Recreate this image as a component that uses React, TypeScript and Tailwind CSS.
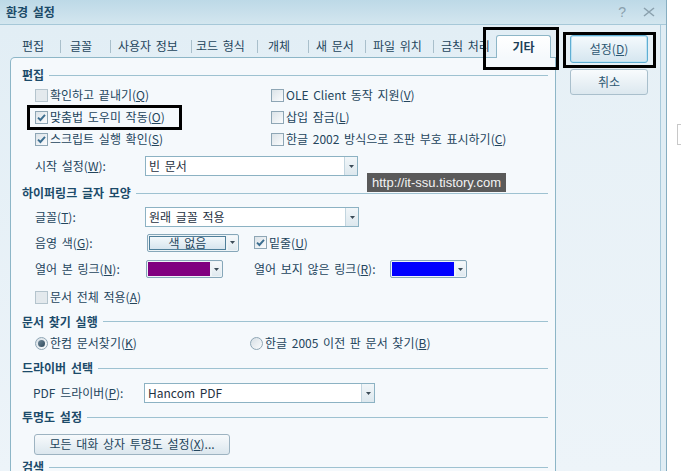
import React from "react";

function Check({ checked, dim }: { checked?: boolean; dim?: boolean }) {
  return (
    <span
      className={`relative inline-flex items-center justify-center w-[13px] h-[13px] shrink-0 border ${
        dim
          ? "border-[#b4c4cd] bg-[#e3e9ed]"
          : "border-[#8ea6b5] bg-gradient-to-br from-[#dbe3e8] to-[#fbfcfd]"
      }`}
    >
      {checked && (
        <svg width="11" height="11" viewBox="0 0 11 11">
          <path d="M2 5.6 L4.4 8 L9 2.8" fill="none" stroke="#3c6e90" strokeWidth="1.9" />
        </svg>
      )}
    </span>
  );
}

function Radio({ checked }: { checked?: boolean }) {
  return (
    <span className="inline-flex items-center justify-center w-[13px] h-[13px] shrink-0 rounded-full border border-[#8ea6b5] bg-gradient-to-br from-[#d6dfe5] to-[#fbfcfd]">
      {checked && <span className="w-[7px] h-[7px] rounded-full bg-gradient-to-br from-[#6f8899] to-[#2f4a5c]" />}
    </span>
  );
}

function Arrow() {
  return (
    <svg width="5" height="3" viewBox="0 0 5 3">
      <path d="M0 0 H5 L2.5 3 Z" fill="#3b4b57" />
    </svg>
  );
}

function Dropdown({ value, w }: { value: string; w: string }) {
  return (
    <div className={`${w} h-[20px] flex border border-[#8cb2c3] bg-white`}>
      <div className="flex-1 flex items-center pl-[3px] text-[#1f3242]">{value}</div>
      <div className="w-[13px] flex items-center justify-center bg-gradient-to-b from-[#f1f6f9] to-[#dde8ee] border-l border-[#c2d5df]">
        <Arrow />
      </div>
    </div>
  );
}

function ColorPick({ color, label, w }: { color?: string; label?: string; w: string }) {
  return (
    <div className="h-[18px] flex gap-[2px] border border-[#86a7b9] rounded-[2px] bg-[#eef4f7] p-px">
      {label ? (
        <div className={`${w} flex items-center justify-center border border-[#4f7f9a] bg-gradient-to-b from-[#f3f8fb] to-[#d7e5ee] text-[#24455c]`}>
          {label}
        </div>
      ) : (
        <div className={`${w}`} style={{ backgroundColor: color }} />
      )}
      <div className="w-[9px] flex items-center justify-center bg-gradient-to-b from-[#f6f9fb] to-[#dfe9ef]">
        <Arrow />
      </div>
    </div>
  );
}

function Header({ title }: { title: string }) {
  return (
    <div className="h-full flex items-center pl-[11px] pr-[7px]">
      <span className="font-bold text-[#1c4b6a]">{title}</span>
      <span className="flex-1 ml-[5px] h-px bg-[#9ec2d1]" />
    </div>
  );
}

function Tabs() {
  const sep = "w-px h-[13px] mb-[4px] bg-[#a9bfcb] shrink-0";
  return (
    <div className="h-[32px] flex items-end shrink-0">
      <div className="ml-[22px] w-[38px] h-[22px] flex items-center shrink-0">편집</div>
      <div className={sep} />
      <div className="ml-[9px] w-[40px] h-[22px] flex items-center shrink-0">글꼴</div>
      <div className={sep} />
      <div className="ml-[7px] w-[73px] h-[22px] flex items-center shrink-0">사용자 정보</div>
      <div className={sep} />
      <div className="ml-[4px] w-[61px] h-[22px] flex items-center shrink-0">코드 형식</div>
      <div className={sep} />
      <div className="ml-[10px] w-[40px] h-[22px] flex items-center shrink-0">개체</div>
      <div className={sep} />
      <div className="ml-[7px] w-[49px] h-[22px] flex items-center shrink-0">새 문서</div>
      <div className={sep} />
      <div className="ml-[7px] w-[60px] h-[22px] flex items-center shrink-0">파일 위치</div>
      <div className={sep} />
      <div className="ml-[7px] w-[55px] h-[22px] flex items-center shrink-0 overflow-hidden whitespace-nowrap">금칙 처리</div>
      <div className="relative z-10 -mb-px w-[55px] h-[23px] shrink-0 flex items-center justify-center font-bold text-[#1d3f57] border border-b-0 border-[#8db6c7] rounded-t-[3px] bg-gradient-to-b from-white to-[#f5f9fc]">
        기타
      </div>
    </div>
  );
}

function Panel() {
  return (
    <div className="ml-[10px] w-[546px] flex-1 min-h-0 overflow-hidden border-l border-t border-r border-[#8db6c7] rounded-tl-[5px] bg-[#f5f9fc] pt-[8px]">
      <div className="h-[18px]"><Header title="편집" /></div>
      <div className="h-[22px] flex items-center pl-[24px]">
        <div className="w-[236px] flex items-center gap-[2px]"><Check dim /><span>확인하고 끝내기(<u>Q</u>)</span></div>
        <div className="flex items-center gap-[2px]"><Check /><span>OLE Client 동작 지원(<u>V</u>)</span></div>
      </div>
      <div className="h-[22px] flex items-center pl-[24px]">
        <div className="w-[236px] flex items-center gap-[2px]"><Check checked /><span>맞춤법 도우미 작동(<u>O</u>)</span></div>
        <div className="flex items-center gap-[2px]"><Check /><span>삽입 잠금(<u>L</u>)</span></div>
      </div>
      <div className="h-[22px] flex items-center pl-[24px]">
        <div className="w-[236px] flex items-center gap-[2px]"><Check checked /><span>스크립트 실행 확인(<u>S</u>)</span></div>
        <div className="flex items-center gap-[2px]"><Check /><span>한글 2002 방식으로 조판 부호 표시하기(<u>C</u>)</span></div>
      </div>
      <div className="h-[32px] flex items-center pl-[24px]">
        <div className="w-[110px]">시작 설정(<u>W</u>):</div>
        <Dropdown value="빈 문서" w="w-[213px]" />
      </div>
      <div className="h-[22px]"><Header title="하이퍼링크 글자 모양" /></div>
      <div className="h-[26px] flex items-center pl-[24px]">
        <div className="w-[110px]">글꼴(<u>T</u>):</div>
        <Dropdown value="원래 글꼴 적용" w="w-[214px]" />
      </div>
      <div className="h-[25px] flex items-center pl-[24px]">
        <div className="w-[112px]">음영 색(<u>G</u>):</div>
        <ColorPick label="색 없음" w="w-[77px]" />
        <div className="ml-[15px] flex items-center gap-[2px]"><Check checked /><span>밑줄(<u>U</u>)</span></div>
      </div>
      <div className="h-[28px] flex items-center pl-[24px]">
        <div className="w-[111px]">열어 본 링크(<u>N</u>):</div>
        <ColorPick color="#800080" w="w-[62px]" />
        <div className="ml-[31px] w-[136px]">열어 보지 않은 링크(<u>R</u>):</div>
        <ColorPick color="#0000ff" w="w-[62px]" />
      </div>
      <div className="h-[28px] flex items-center pl-[24px]">
        <div className="flex items-center gap-[2px]"><Check dim /><span>문서 전체 적용(<u>A</u>)</span></div>
      </div>
      <div className="h-[21px]"><Header title="문서 찾기 실행" /></div>
      <div className="h-[22px] flex items-center pl-[24px]">
        <div className="w-[215px] flex items-center gap-[2px]"><Radio checked /><span>한컴 문서찾기(<u>K</u>)</span></div>
        <div className="flex items-center gap-[2px]"><Radio /><span>한글 2005 이전 판 문서 찾기(<u>B</u>)</span></div>
      </div>
      <div className="h-[28px]"><Header title="드라이버 선택" /></div>
      <div className="h-[22px] flex items-center pl-[22px]">
        <div className="w-[111px]">PDF 드라이버(<u>P</u>):</div>
        <Dropdown value="Hancom PDF" w="w-[231px]" />
      </div>
      <div className="h-[26px]"><Header title="투명도 설정" /></div>
      <div className="h-[28px] flex items-center pl-[23px]">
        <div className="w-[196px] h-[21px] flex items-center justify-center rounded-[3px] border border-[#9db3c1] bg-gradient-to-b from-[#f7fafc] to-[#dce7ee] text-[#24455c]">
          모든 대화 상자 투명도 설정(<u>X</u>)...
        </div>
      </div>
      <div className="h-[18px]"><Header title="검색" /></div>
    </div>
  );
}

function Sidebar() {
  return (
    <div className="flex shrink-0">
      <div className="w-[104px] flex flex-col pt-[10px] pl-[14px] bg-gradient-to-b from-[#e6f0f6] to-[#edf4f9]">
        <div className="w-[78px] h-[28px] flex items-center justify-center rounded-[3px] border border-[#5faed3] shadow-[inset_0_0_0_1px_#bfe3f3] bg-gradient-to-b from-[#f5fafd] to-[#d5e6f0] text-[#2d5873]">
          설정(<u>D</u>)
        </div>
        <div className="mt-[6px] w-[78px] h-[26px] flex items-center justify-center rounded-[3px] border border-[#a9bfcc] bg-gradient-to-b from-[#f8fbfd] to-[#dce8ef] text-[#2d5873]">
          취소
        </div>
      </div>
      <div className="w-[6px] border-l border-[#a9cadb] bg-[#e0edf4]" />
    </div>
  );
}

export default function App() {
  return (
    <div className="relative w-[681px] h-[471px] overflow-hidden bg-white text-[12px] leading-none text-[#24455c] font-['Noto_Sans_CJK_KR','Noto_Sans',sans-serif] [word-spacing:2px]">
      <div className="w-[667px] h-full flex flex-col border-r border-[#86adc0] bg-[#e7f0f6]">
        <div className="h-[25px] shrink-0 flex items-center border-b border-[#a6c8d8] bg-gradient-to-b from-[#bdd9e7] to-[#d3e6ef]">
          <span className="pl-[6px] font-bold text-[#1b4a68]">환경 설정</span>
          <span className="flex-1" />
          <span className="text-[14px] text-[#8ba1ae] font-['Liberation_Sans',sans-serif]">?</span>
          <svg className="ml-[17px] mr-[11px]" width="12" height="10" viewBox="0 0 12 10">
            <path d="M1 1 L11 9 M11 1 L1 9" stroke="#8ba1ae" strokeWidth="1.6" />
          </svg>
        </div>
        <div className="flex-1 flex min-h-0 bg-gradient-to-b from-[#e2eef5] to-[#edf4f9]">
          <div className="w-[556px] flex flex-col">
            <Tabs />
            <Panel />
          </div>
          <Sidebar />
        </div>
      </div>

      {/* annotation boxes */}
      <div className="absolute left-[483px] top-[27px] w-[76px] h-[43px] border-[3px] border-black" />
      <div className="absolute left-[563px] top-[32px] w-[93px] h-[36px] border-[3px] border-black" />
      <div className="absolute left-[27px] top-[105px] w-[155px] h-[25px] border-[3px] border-black" />

      {/* tooltip */}
      <div className="absolute left-[367px] top-[173px] w-[139px] h-[19px] flex items-center justify-center bg-[#5a5a5a] text-[#f2f2f2] text-[13px] font-['Liberation_Sans',sans-serif] [word-spacing:0px]">
        http://it-ssu.tistory.com
      </div>

      <div className="absolute left-[677px] top-[124px] w-[4px] h-[21px] border-l border-t border-b border-[#c8c8c8]" />
    </div>
  );
}
